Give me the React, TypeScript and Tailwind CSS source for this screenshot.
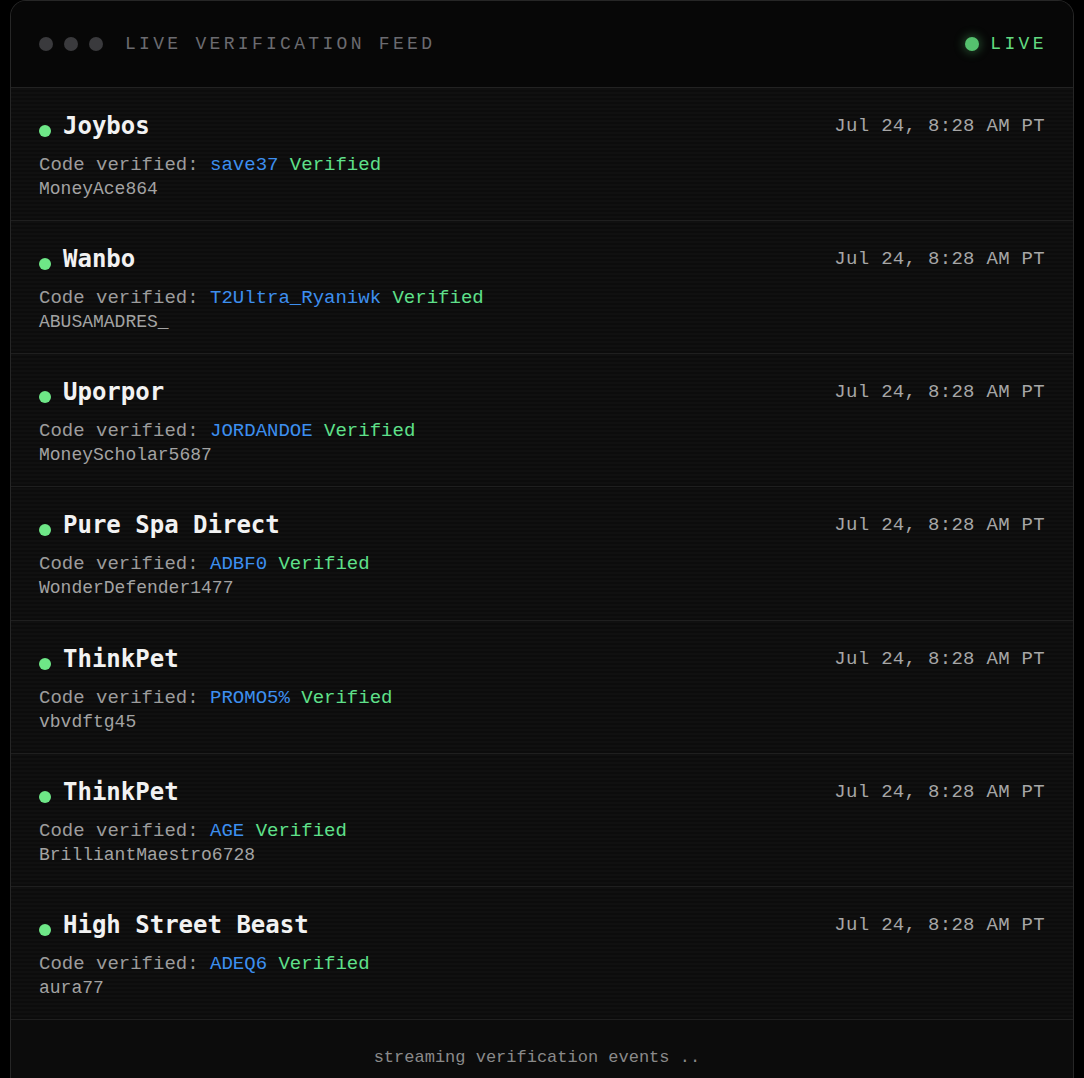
const events = [
  { brand: 'Joybos', code: 'save37', user: 'MoneyAce864' },
  { brand: 'Wanbo', code: 'T2Ultra_Ryaniwk', user: 'ABUSAMADRES_' },
  { brand: 'Uporpor', code: 'JORDANDOE', user: 'MoneyScholar5687' },
  { brand: 'Pure Spa Direct', code: 'ADBF0', user: 'WonderDefender1477' },
  { brand: 'ThinkPet', code: 'PROMO5%', user: 'vbvdftg45' },
  { brand: 'ThinkPet', code: 'AGE', user: 'BrilliantMaestro6728' },
  { brand: 'High Street Beast', code: 'ADEQ6', user: 'aura77' },
];

const mono = "font-['Liberation_Mono','DejaVu_Sans_Mono',monospace]";

function FeedRow({ brand, code, user }: { brand: string; code: string; user: string }) {
  return (
    <li className="border-b border-[#1f1f1f] bg-[repeating-linear-gradient(0deg,#0c0c0c_0px,#0c0c0c_2px,#101010_2px,#101010_4px)] px-7 pt-6 pb-[19.15px]">
      <div className="flex items-start justify-between">
        <div className="flex items-center gap-3">
          <span className="mt-[10px] h-3 w-3 rounded-full bg-[#6ee787]" />
          <h3 className="font-['DejaVu_Sans_Mono',monospace] text-[24px] leading-7 font-bold text-[#f2f2f2]">
            {brand}
          </h3>
        </div>
        <span className={`${mono} text-[19px] leading-7 tracking-[0.3px] text-[#a6a6a6]`}>Jul 24, 8:28 AM PT</span>
      </div>
      <p className={`${mono} mt-[13px] text-[19px] leading-6 text-[#9c9c9c]`}>
        Code verified: <span className="text-[#3d8fef]">{code}</span>{' '}
        <span className="text-[#5fe08a]">Verified</span>
      </p>
      <p className={`${mono} text-[18px] leading-6 text-[#a3a3a3]`}>{user}</p>
    </li>
  );
}

export default function App() {
  return (
    <div className="min-h-screen bg-black px-[10px]">
      <section className="overflow-hidden rounded-t-2xl border border-b-0 border-[#262626] bg-[#0b0b0b]">
        <header className="flex h-[87px] items-center justify-between border-b border-[#222] bg-[#070707] px-7">
          <div className="flex items-center">
            <div className="flex gap-[11px]">
              <span className="h-[14px] w-[14px] rounded-full bg-[#3a3a3d]" />
              <span className="h-[14px] w-[14px] rounded-full bg-[#3a3a3d]" />
              <span className="h-[14px] w-[14px] rounded-full bg-[#3a3a3d]" />
            </div>
            <h2 className={`${mono} ml-[22px] text-[18px] tracking-[3.3px] text-[#6b6b70]`}>
              LIVE VERIFICATION FEED
            </h2>
          </div>
          <div className="flex items-center gap-[11px]">
            <span className="h-[14px] w-[14px] rounded-full bg-[#55c16e] shadow-[0_0_10px_2px_rgba(85,193,110,0.35)]" />
            <span className={`${mono} -mr-[2px] text-[18px] tracking-[3.4px] text-[#62da80]`}>LIVE</span>
          </div>
        </header>
        <ul>
          {events.map((e, i) => (
            <FeedRow key={i} {...e} />
          ))}
        </ul>
        <footer className={`${mono} bg-[#0c0c0c] pt-7 pb-6 text-center text-[17px] leading-5 text-[#8a8a8a]`}>
          streaming verification events ..<span className="invisible">.</span>
        </footer>
      </section>
    </div>
  );
}
